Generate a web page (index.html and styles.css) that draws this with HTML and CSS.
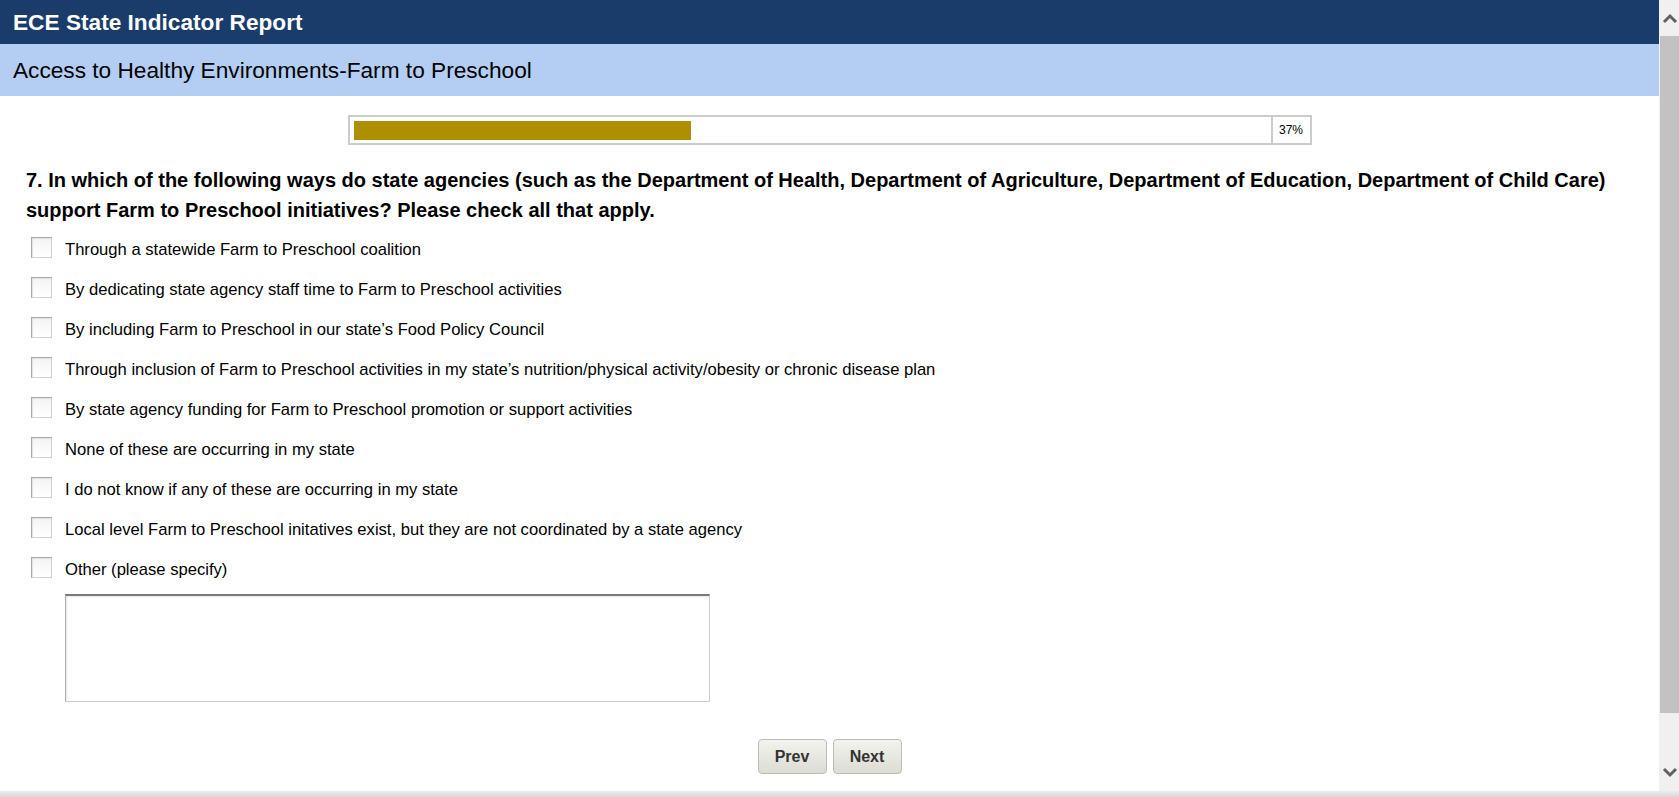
FILE: index.html
```html
<!DOCTYPE html>
<html lang="en">

<head>
    <meta charset="UTF-8">
    <meta name="viewport" content="width=device-width, initial-scale=1.0">
    <title>ECE State Indicator Report</title>
    <link rel="stylesheet" href="styles.css">
</head>

<body>
    <div class="window">
        <div class="page">
            <div class="title-bar">ECE State Indicator Report</div>
            <div class="section-bar">Access to Healthy Environments-Farm to Preschool</div>

            <div class="content">
                <div class="progress">
                    <div class="progress-track">
                        <div class="progress-fill" style="width: 37%"></div>
                    </div>
                    <div class="progress-label">37%</div>
                </div>

                <h2 class="question">7. In which of the following ways do state agencies (such as the Department of Health, Department of Agriculture, Department of Education, Department of Child Care) support Farm to Preschool initiatives? Please check all that apply.</h2>

                <div class="options">
                    <label class="option"><input type="checkbox" /><span>Through a statewide Farm to Preschool coalition</span></label>
                    <label class="option"><input type="checkbox" /><span>By dedicating state agency staff time to Farm to Preschool activities</span></label>
                    <label class="option"><input type="checkbox" /><span>By including Farm to Preschool in our state’s Food Policy Council</span></label>
                    <label class="option"><input type="checkbox" /><span>Through inclusion of Farm to Preschool activities in my state’s nutrition/physical activity/obesity or chronic disease plan</span></label>
                    <label class="option"><input type="checkbox" /><span>By state agency funding for Farm to Preschool promotion or support activities</span></label>
                    <label class="option"><input type="checkbox" /><span>None of these are occurring in my state</span></label>
                    <label class="option"><input type="checkbox" /><span>I do not know if any of these are occurring in my state</span></label>
                    <label class="option"><input type="checkbox" /><span>Local level Farm to Preschool initatives exist, but they are not coordinated by a state agency</span></label>
                    <label class="option"><input type="checkbox" /><span>Other (please specify)</span></label>
                </div>

                <textarea class="other-text"></textarea>

                <div class="nav-buttons">
                    <button>Prev</button>
                    <button>Next</button>
                </div>
            </div>
        </div>

        <!-- fake window scrollbar -->
        <div class="scrollbar">
            <div class="scroll-arrow">
                <svg width="16" height="12" viewBox="0 0 16 12"><path d="M2 10 L8 4 L14 10" fill="none" stroke="#606060" stroke-width="3" /></svg>
            </div>
            <div class="scroll-thumb"></div>
            <div class="scroll-rest"></div>
            <div class="scroll-arrow">
                <svg width="16" height="12" viewBox="0 0 16 12"><path d="M2 2 L8 8 L14 2" fill="none" stroke="#606060" stroke-width="3" /></svg>
            </div>
        </div>
    </div>
    <div class="bottom-edge"></div>
</body>

</html>
```

FILE: styles.css
```css
body {
    margin: 0;
    height: 100vh;
    display: flex;
    flex-direction: column;
    overflow: hidden;
    font-family: "Liberation Sans", Arial, sans-serif;
    color: #000;
    background: #fff;
}

.window {
    flex: 1;
    display: flex;
    min-height: 0;
}

.page {
    flex: 1;
    overflow: hidden;
}

/* Header bars */
.title-bar {
    height: 44px;
    padding: 0 13px;
    display: flex;
    align-items: center;
    background-color: #1a3c6a;
    color: white;
    font-size: 17pt;
    font-weight: bold;
}

.section-bar {
    height: 52px;
    padding: 0 13px;
    display: flex;
    align-items: center;
    background-color: #b4cef3;
    font-size: 17pt;
}

.content {
    padding: 19px 26px 0;
}

/* Progress */
.progress {
    width: 964px;
    height: 30px;
    margin: 0 auto;
    box-sizing: border-box;
    border: 2px solid #cccccc;
    display: flex;
}

.progress-track {
    flex: 1;
    padding: 4px 4px 3px;
}

.progress-fill {
    height: 100%;
    background-color: #ae8f00;
}

.progress-label {
    width: 37px;
    border-left: 2px solid #cccccc;
    display: flex;
    align-items: center;
    justify-content: center;
    font-size: 12px;
}

/* Question */
.question {
    margin: 20px 0 3px;
    font-size: 20px;
    line-height: 30px;
    font-weight: bold;
}

.options {
    padding-top: 2px;
}

.option {
    height: 40px;
    display: flex;
    align-items: center;
    font-size: 16.6px;
}

.option input {
    appearance: none;
    -webkit-appearance: none;
    width: 21px;
    height: 21px;
    margin: 0 13px 6px 5px;
    box-sizing: border-box;
    border: 1px solid #d0d0d0;
    border-top-color: #a9a9a9;
    border-left-color: #a9a9a9;
    background: linear-gradient(#f4f4f4, #ffffff);
    box-shadow: inset 1px 1px 1px #e2e2e2;
}

.other-text {
    display: block;
    width: 645px;
    height: 108px;
    margin: 4px 0 0 39px;
    box-sizing: border-box;
    border: 1px solid #cccccc;
    border-top: 2px solid #7a7a7a;
    border-left-color: #b0b0b0;
    box-shadow: inset 1px 1px 2px #e6e6e6;
    resize: none;
}

/* Prev / Next */
.nav-buttons {
    margin-top: 37px;
    display: flex;
    justify-content: center;
    gap: 6px;
}

.nav-buttons button {
    width: 69px;
    height: 35px;
    border: 1px solid #bcbcb8;
    border-radius: 4px;
    background: linear-gradient(#f3f3ef, #dcdcd4);
    color: #333;
    font-family: "Liberation Sans", Arial, sans-serif;
    font-size: 16px;
    font-weight: bold;
    cursor: pointer;
}

/* Scrollbar */
.scrollbar {
    width: 20px;
    display: flex;
    flex-direction: column;
    background-color: #f0f0f0;
}

.scroll-arrow {
    height: 36px;
    display: flex;
    align-items: center;
    justify-content: center;
    padding-left: 1px;
}

.scroll-thumb {
    height: 677px;
    margin-left: 1px;
    background-color: #c2c2c2;
}

.scroll-rest {
    flex: 1;
}

.bottom-edge {
    height: 6px;
    background: linear-gradient(#ececec, #d8d8d8);
}
```
